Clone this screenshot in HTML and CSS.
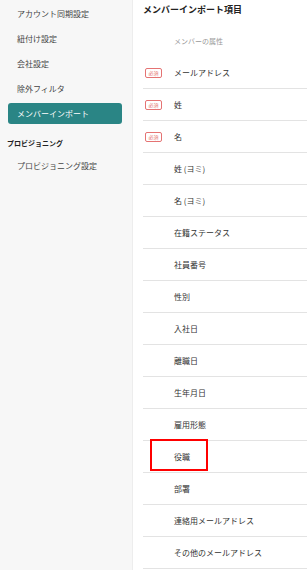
FILE: index.html
```html
<!DOCTYPE html>
<html lang="ja">
	<head>
		<meta charset="UTF-8" />
		<meta name="viewport" content="width=device-width, initial-scale=1.0" />
		<title>メンバーインポート項目</title>
		<link rel="stylesheet" href="styles.css">
	</head>

	<body>
		<div class="layout">
			<nav class="sidebar">
				<a class="nav-item">アカウント同期設定</a>
				<a class="nav-item">紐付け設定</a>
				<a class="nav-item">会社設定</a>
				<a class="nav-item">除外フィルタ</a>
				<a class="nav-item active">メンバーインポート</a>
				<div class="nav-heading">プロビジョニング</div>
				<a class="nav-item">プロビジョニング設定</a>
			</nav>

			<main class="content">
				<h1>メンバーインポート項目</h1>
				<div class="attr-head">メンバーの属性</div>

				<ul class="attr-list">
					<li><span class="badge">必須</span><span class="name">メールアドレス</span></li>
					<li><span class="badge">必須</span><span class="name">姓</span></li>
					<li><span class="badge">必須</span><span class="name">名</span></li>
					<li><span></span><span class="name">姓 (ヨミ)</span></li>
					<li><span></span><span class="name">名 (ヨミ)</span></li>
					<li><span></span><span class="name">在籍ステータス</span></li>
					<li><span></span><span class="name">社員番号</span></li>
					<li><span></span><span class="name">性別</span></li>
					<li><span></span><span class="name">入社日</span></li>
					<li><span></span><span class="name">離職日</span></li>
					<li><span></span><span class="name">生年月日</span></li>
					<li><span></span><span class="name">雇用形態</span></li>
					<li class="marked"><span></span><span class="name">役職</span><span class="highlight"></span></li>
					<li><span></span><span class="name">部署</span></li>
					<li><span></span><span class="name">連絡用メールアドレス</span></li>
					<li><span></span><span class="name">その他のメールアドレス</span></li>
				</ul>
			</main>
		</div>
	</body>
</html>
```

FILE: styles.css
```css
    body {
      margin: 0;
      font-family: "Noto Sans CJK JP", "Noto Sans", sans-serif;
      color: #333;
      background: #fff;
    }
    .layout {
      display: flex;
      height: 570px;
      overflow: hidden;
    }
    .sidebar {
      width: 132px;
      flex-shrink: 0;
      background: #f7f7f7;
      border-right: 1px solid #ededed;
      padding-top: 3px;
      display: flex;
      flex-direction: column;
    }
    .nav-item {
      display: block;
      height: 21px;
      line-height: 21px;
      margin-bottom: 4px;
      padding-left: 17px;
      font-size: 8px;
      color: #444;
    }
    .nav-item.active {
      background: #2a8585;
      color: #fff;
      border-radius: 3px;
      margin: 0 10px 0 8px;
      padding-left: 9px;
    }
    .nav-heading {
      margin-top: 12px;
      height: 14px;
      line-height: 14px;
      padding-left: 7px;
      font-size: 7px;
      font-weight: bold;
      color: #222;
    }
    .nav-heading + .nav-item {
      margin-top: 5px;
    }

    .content {
      flex: 1;
      padding-left: 10px;
    }
    h1 {
      margin: 0;
      height: 20px;
      line-height: 20px;
      font-size: 9px;
      font-weight: bold;
      color: #222;
    }
    .attr-head {
      margin-top: 5px;
      height: 32px;
      line-height: 32px;
      padding-left: 31px;
      font-size: 7px;
      color: #999;
    }
    .attr-list {
      list-style: none;
      margin: 0;
      padding: 0;
    }
    .attr-list li {
      position: relative;
      display: grid;
      grid-template-columns: 31px 1fr;
      align-items: center;
      height: 31px;
      border-bottom: 1px solid #e3e3e3;
      font-size: 8px;
    }
    .badge {
      margin-left: 2px;
      width: 15px;
      height: 8px;
      line-height: 8px;
      border: 1px solid #e57373;
      border-radius: 2px;
      color: #e57373;
      font-size: 5px;
      text-align: center;
    }
    .highlight {
      position: absolute;
      left: 7px;
      top: -2px;
      width: 54px;
      height: 28px;
      border: 2px solid #f00;
    }
```
